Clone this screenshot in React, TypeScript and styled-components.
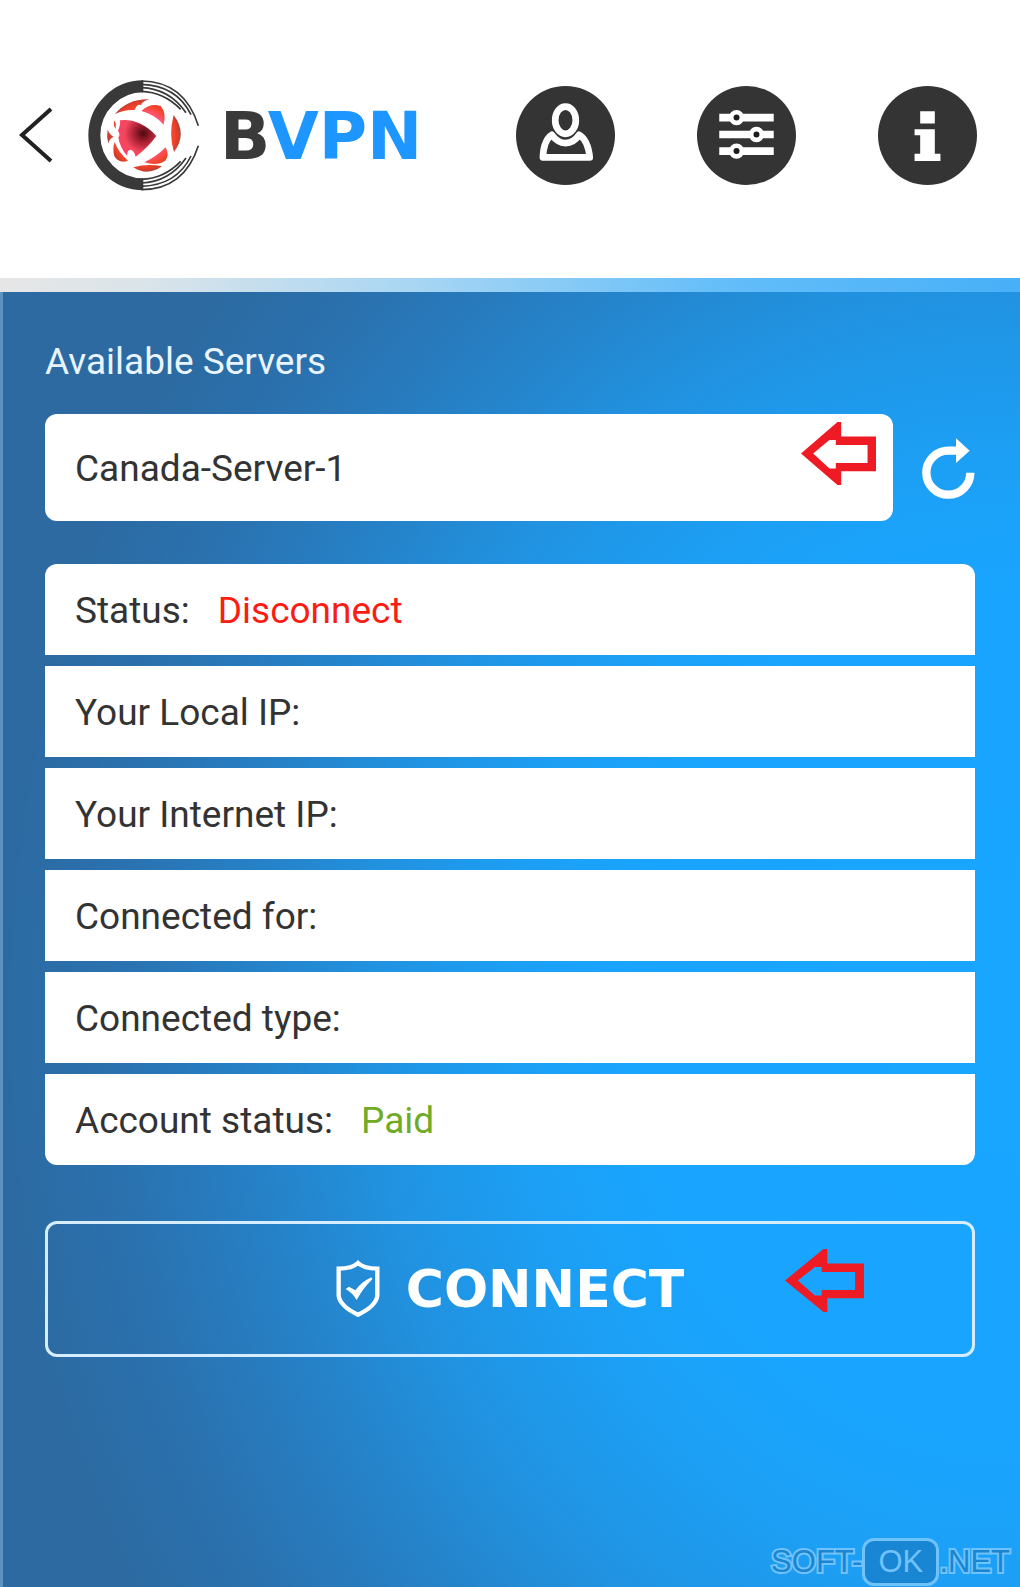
import React from "react";
import styled, { createGlobalStyle } from "styled-components";

const GlobalStyle = createGlobalStyle`
  *, *::before, *::after { box-sizing: border-box; }
  body { margin: 0; background: #fff; font-family: Roboto, "Liberation Sans", sans-serif; }
  button, select { font: inherit; color: inherit; }
`;

const Screen = styled.div`
  position: relative;
  display: flex;
  flex-direction: column;
  min-height: 100vh;
  overflow: hidden;
`;

const Header = styled.header`
  display: flex;
  align-items: center;
  padding: 72px 43px 80px 18px;
`;

const PlainButton = styled.button`
  display: grid;
  place-items: center;
  flex: none;
  padding: 0;
  border: 0;
  background: none;
  cursor: pointer;
`;

const Brand = styled.a`
  display: flex;
  align-items: center;
  gap: 20px;
  height: 126px;
  margin-left: 34px;
  color: #3a3a3a;
  text-decoration: none;
`;

const BrandName = styled.span`
  padding-top: 4px;
  font: bold 66px/72px "DejaVu Sans", sans-serif;
`;

const BrandAccent = styled.span`
  color: #1e96ff;
`;

const Nav = styled.nav`
  display: flex;
  gap: 82px;
  margin-left: auto;
`;

const Strip = styled.div`
  height: 14px;
  background: linear-gradient(90deg, #e6e6e6 0%, #dbe4ea 14%, #a9d6f3 40%, #62bdf9 72%, #48b0f8 100%);
`;

const Panel = styled.main`
  flex: 1;
  padding: 48px 45px 48px 42px;
  border-left: 3px solid #5d93c1;
  background:
    radial-gradient(ellipse 1000px 1160px at 98% 56%,
      #19a6ff 0%, #19a5ff 36%, #1c9ff4 49%, #2192e0 63%, #2680c5 76%, #2a72b0 88%, #2c6aa1 100%);
`;

const FieldLabel = styled.label`
  display: block;
  margin-bottom: 30px;
  color: #e8f4ff;
  font-size: 37px;
  line-height: 44px;
`;

const ServerRow = styled.div`
  display: flex;
  align-items: center;
  gap: 28px;
  margin-bottom: 43px;
`;

const SelectBox = styled.div`
  position: relative;
  flex: 1;
`;

const ServerSelect = styled.select`
  display: block;
  width: 100%;
  height: 107px;
  padding: 2px 30px 0;
  border: 0;
  border-radius: 12px;
  appearance: none;
  background: #fff;
  color: #333;
  font-size: 37px;
`;

const Pointer = styled.svg<{ $top: number; $right: number }>`
  position: absolute;
  top: ${(p) => p.$top}px;
  right: ${(p) => p.$right}px;
  pointer-events: none;
`;

const Details = styled.dl`
  display: grid;
  gap: 11px;
  margin: 0 0 56px;
`;

const DetailRow = styled.div`
  display: flex;
  align-items: center;
  gap: 28px;
  height: 91px;
  padding: 2px 30px 0;
  background: #fff;
  color: #333;
  font-size: 37px;

  &:first-child { border-radius: 12px 12px 0 0; }
  &:last-child { border-radius: 0 0 12px 12px; }
`;

const DetailValue = styled.dd<{ $color: string }>`
  margin: 0;
  color: ${(p) => p.$color};
`;

const ConnectButton = styled.button`
  position: relative;
  display: flex;
  align-items: center;
  justify-content: center;
  gap: 26px;
  width: 100%;
  height: 136px;
  border: 3px solid #d5edff;
  border-radius: 12px;
  background: none;
  color: #fff;
  font: bold 52px/60px "DejaVu Sans", sans-serif;
  cursor: pointer;
`;

const Watermark = styled.div`
  position: absolute;
  right: 10px;
  bottom: 1px;
  display: flex;
  align-items: center;
  color: #1a86d1;
  font: 31px/48px "Liberation Sans", sans-serif;
  -webkit-text-stroke: 4px #70c2fa;
  paint-order: stroke fill;
`;

const WatermarkBadge = styled.span`
  width: 77px;
  border: 3px solid #70c2fa;
  border-radius: 12px;
  background: #1886d2;
  color: #70c2fa;
  line-height: 42px;
  text-align: center;
  -webkit-text-stroke: 0;
`;

const Chevron = () => (
  <svg width="36" height="60" viewBox="0 0 36 60" fill="none" stroke="#222" strokeWidth="4" aria-hidden="true">
    <path d="M33 4 4 30 33 56" />
  </svg>
);

const GlobeLogo = () => (
  <svg width="112" height="113" viewBox="264 57 336 339" aria-hidden="true">
    <defs>
      <radialGradient id="core" gradientUnits="userSpaceOnUse" cx="430" cy="220" r="88">
        <stop offset="0" stopColor="#4d0b10" />
        <stop offset=".3" stopColor="#a51f31" />
        <stop offset=".65" stopColor="#f4475f" />
        <stop offset="1" stopColor="#ff4266" />
      </radialGradient>
      <radialGradient id="patch" gradientUnits="userSpaceOnUse" cx="432" cy="226" r="114">
        <stop offset=".55" stopColor="#ff5a83" />
        <stop offset=".78" stopColor="#f5452c" />
        <stop offset=".9" stopColor="#dc3c28" />
        <stop offset="1" stopColor="#8a4850" />
      </radialGradient>
    </defs>
    <path d="M430 79A147 147 0 0 0 430 373" fill="none" stroke="#393939" strokeWidth="36" />
    <g fill="none" stroke="#393939" strokeWidth="5">
      <path d="M424 63Q553 64 595 197M424 389Q553 388 595 257" />
      <path d="M424 73Q530 76 573 164M424 379Q530 376 573 288" />
      <path d="M424 83Q508 86 558 158M424 369Q508 366 558 294" />
      <path d="M424 94Q492 96 542 148M424 358Q492 356 542 304" />
    </g>
    <path d="M360 181Q390 176 418 190Q448 204 469 228Q442 265 407 290Q402 270 391 269Q379 272 382 289Q359 262 355 232Q362 225 354 212Q362 195 360 181Z" fill="url(#core)" />
    <g fill="url(#patch)">
      <path d="M345 162Q384 116 447 118Q425 126 423 135Q411 130 404 150Q374 148 345 162Z" />
      <path d="M424 153Q451 128 482 138Q500 158 491 194Q465 164 424 153Z" />
      <path d="M521 165Q563 221 522 276Q505 225 521 165Z" />
      <path d="M497 262Q510 288 495 303Q471 319 433 307Q469 290 497 262Z" />
      <path d="M400 322Q443 310 486 319Q442 350 400 322Z" />
      <path d="M344 246Q355 277 384 302Q358 312 343 289Q337 267 344 246Z" />
      <path d="M323 209Q330 226 341 230Q327 237 325 251Q319 230 323 209Z" />
      <path d="M344 181Q350 193 347 207Q338 196 344 181Z" />
    </g>
  </svg>
);

const UserIcon = () => (
  <svg width="99" height="99" viewBox="0 0 298 298" aria-hidden="true">
    <circle cx="149" cy="149" r="149" fill="#343434" />
    <g fill="none" stroke="#fff" strokeWidth="20" strokeLinejoin="round">
      <ellipse cx="149" cy="103" rx="31" ry="41" />
      <path d="M108 147Q83 163 81 215H222Q217 163 190 147Q174 171 149 172Q125 171 108 147Z" />
    </g>
  </svg>
);

const SettingsIcon = () => (
  <svg width="99" height="99" viewBox="0 0 298 298" aria-hidden="true">
    <circle cx="149" cy="149" r="149" fill="#343434" />
    <path d="M67 95H231M67 146H231M67 196H231" stroke="#fff" strokeWidth="23" />
    <g fill="#1c1c1c" stroke="#fff" strokeWidth="14">
      <circle cx="119" cy="95" r="16" />
      <circle cx="179" cy="146" r="16" />
      <circle cx="119" cy="196" r="16" />
    </g>
  </svg>
);

const InfoIcon = () => (
  <svg width="99" height="99" viewBox="0 0 298 298" aria-hidden="true">
    <circle cx="149" cy="149" r="149" fill="#343434" />
    <path d="M127 76H171V113H127ZM110 130H171V204H188V226H110V204H127V148H110Z" fill="#fff" />
  </svg>
);

const RefreshIcon = () => (
  <svg width="54" height="62" viewBox="0 0 162 186" aria-hidden="true">
    <path d="M148 107A66 66 0 1 1 82 41H110" fill="none" stroke="#fff" strokeWidth="25" />
    <path d="M105 4 146 41 105 78Z" fill="#fff" />
  </svg>
);

const ShieldIcon = () => (
  <svg width="44" height="58" viewBox="0 0 132 174" aria-hidden="true">
    <path d="M66 9Q48 26 8 26V108Q13 139 66 164Q119 139 124 108V26Q84 26 66 9Z" fill="none" stroke="#fff" strokeWidth="13" />
    <path d="M29 87 39 80 58 91Q76 66 106 52L109 58Q81 85 62 120Q50 99 29 87Z" fill="#fff" />
  </svg>
);

const RedArrow = ({ width, top, right }: { width: number; top: number; right: number }) => (
  <Pointer $top={top} $right={right} width={width} height="63" viewBox="0 0 222 188" preserveAspectRatio="none" aria-hidden="true">
    <path
      d="M0 94 108 0H119V43H222V147H119V188H108ZM36 94 84 139H103V122H197V69H103V54H84Z"
      fill="#ee1b24"
      fillRule="evenodd"
    />
  </Pointer>
);

const details = [
  { label: "Status:", value: "Disconnect", color: "#fb1d12" },
  { label: "Your Local IP:" },
  { label: "Your Internet IP:" },
  { label: "Connected for:" },
  { label: "Connected type:" },
  { label: "Account status:", value: "Paid", color: "#6fab27" },
];

export default function App() {
  return (
    <Screen>
      <GlobalStyle />
      <Header>
        <PlainButton type="button" aria-label="Back"><Chevron /></PlainButton>
        <Brand href="#">
          <GlobeLogo />
          <BrandName>B<BrandAccent>VPN</BrandAccent></BrandName>
        </Brand>
        <Nav>
          <PlainButton type="button" aria-label="Account"><UserIcon /></PlainButton>
          <PlainButton type="button" aria-label="Settings"><SettingsIcon /></PlainButton>
          <PlainButton type="button" aria-label="Information"><InfoIcon /></PlainButton>
        </Nav>
      </Header>
      <Strip />
      <Panel>
        <FieldLabel htmlFor="server">Available Servers</FieldLabel>
        <ServerRow>
          <SelectBox>
            <ServerSelect id="server">
              <option>Canada-Server-1</option>
            </ServerSelect>
            <RedArrow width={75} top={8} right={17} />
          </SelectBox>
          <PlainButton type="button" aria-label="Refresh servers"><RefreshIcon /></PlainButton>
        </ServerRow>
        <Details>
          {details.map((d) => (
            <DetailRow key={d.label}>
              <dt>{d.label}</dt>
              {d.value && <DetailValue $color={d.color}>{d.value}</DetailValue>}
            </DetailRow>
          ))}
        </Details>
        <ConnectButton type="button">
          <ShieldIcon />
          CONNECT
          <RedArrow width={79} top={25} right={108} />
        </ConnectButton>
      </Panel>
      <Watermark>
        <span>SOFT-</span>
        <WatermarkBadge>OK</WatermarkBadge>
        <span>.NET</span>
      </Watermark>
    </Screen>
  );
}
